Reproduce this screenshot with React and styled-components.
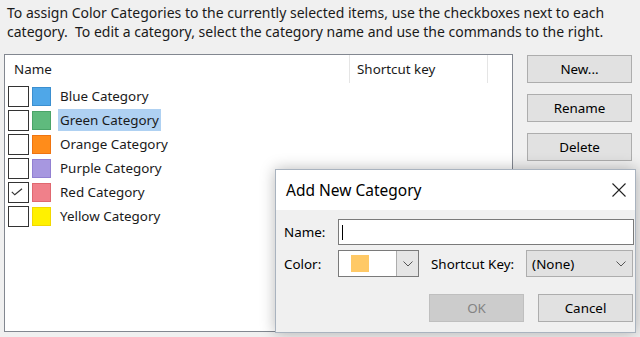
import React from "react";
import styled, { createGlobalStyle } from "styled-components";

const categories = [
  { name: "Blue Category", fill: "#4fa7e8", edge: "#3b8fd0" },
  { name: "Green Category", fill: "#5fba7d", edge: "#4aa468", selected: true },
  { name: "Orange Category", fill: "#ff8c1a", edge: "#ef7410" },
  { name: "Purple Category", fill: "#a797e0", edge: "#9280d2" },
  { name: "Red Category", fill: "#f0808a", edge: "#e06870", checked: true },
  { name: "Yellow Category", fill: "#fff100", edge: "#f2d800" },
];

const GlobalStyle = createGlobalStyle`
  html, body {
    margin: 0;
    padding: 0;
    background: #f0f0f0;
  }
  body {
    font-family: "Noto Sans", "Open Sans", sans-serif;
    font-size: 13px;
    color: #1a1a1a;
  }
`;

const Page = styled.div`
  position: relative;
  width: 640px;
  height: 337px;
  box-sizing: border-box;
  padding: 3px 8px 5px 4px;
  background: #f0f0f0;
  overflow: hidden;
  display: flex;
  flex-direction: column;
`;

const Intro = styled.p`
  margin: 0 0 13px 3px;
  font-size: 14px;
  line-height: 19px;
  white-space: nowrap;
`;

const Main = styled.div`
  display: flex;
  gap: 14px;
  flex: 1;
`;

const ListBox = styled.div`
  width: 509px;
  box-sizing: border-box;
  border: 1px solid #828790;
  background: #fff;
`;

const HeaderRow = styled.div`
  display: grid;
  grid-template-columns: 345px 138px 1fr;
  height: 28px;
`;

const HeaderCell = styled.div`
  display: flex;
  align-items: center;
  padding-left: ${(p) => p.$pad || 9}px;
  border-right: ${(p) => (p.$last ? "none" : "1px solid #e5e5e5")};
  font-size: 13.4px;
`;

const Rows = styled.div`
  display: flex;
  flex-direction: column;
  padding: 1px 0 0 3px;
`;

const Row = styled.div`
  display: flex;
  align-items: center;
  height: 24px;
  gap: 3px;
`;

const Check = styled.div`
  width: 21px;
  height: 21px;
  box-sizing: border-box;
  border: 1px solid #333;
  background: #fff;
  display: flex;
  align-items: center;
  justify-content: center;
`;

const Swatch = styled.div`
  width: 19px;
  height: 19px;
  box-sizing: border-box;
  background: ${(p) => p.$fill};
  border: 1px solid ${(p) => p.$edge};
`;

const RowLabel = styled.span`
  margin-left: 4px;
  padding: 0 2px 0 2px;
  height: 22px;
  display: flex;
  align-items: center;
  background: ${(p) => (p.$selected ? "#afd1f2" : "transparent")};
  font-size: 13.4px;
`;

const ButtonColumn = styled.div`
  display: flex;
  flex-direction: column;
  gap: 11px;
  width: 105px;
  padding-top: 1px;
`;

const Button = styled.button`
  height: 28px;
  width: ${(p) => p.$width || 105}px;
  box-sizing: border-box;
  border: 1px solid ${(p) => (p.disabled ? "#bfbfbf" : "#adadad")};
  background: ${(p) => (p.disabled ? "#cccccc" : "#e1e1e1")};
  color: ${(p) => (p.disabled ? "#838383" : "#000")};
  font-family: inherit;
  font-size: 13.4px;
  padding: 0;
`;

const Dialog = styled.div`
  position: absolute;
  left: 275px;
  top: 169px;
  width: 361px;
  height: 164px;
  box-sizing: border-box;
  border: 1px solid #a9b3bf;
  background: #f0f0f0;
  box-shadow: 0 0 14px rgba(0, 0, 0, 0.28);
  display: flex;
  flex-direction: column;
`;

const TitleBar = styled.div`
  height: 40px;
  background: #fff;
  display: flex;
  align-items: center;
  justify-content: space-between;
  padding: 0 9px 0 10px;
`;

const Title = styled.span`
  font-size: 15.5px;
  color: #000;
`;

const Form = styled.div`
  display: grid;
  grid-template-columns: 54px 1fr;
  row-gap: 5px;
  padding: 9px 1px 0 8px;
`;

const Label = styled.label`
  display: flex;
  align-items: center;
  font-size: 13.4px;
  color: #000;
`;

const TextInput = styled.div`
  height: 26px;
  box-sizing: border-box;
  border: 1px solid #7a7a7a;
  background: #fff;
  display: flex;
  align-items: center;
  padding-left: 3px;
`;

const Caret = styled.span`
  width: 1px;
  height: 15px;
  background: #000;
`;

const ComboRow = styled.div`
  display: flex;
  align-items: center;
`;

const ColorCombo = styled.div`
  width: 81px;
  height: 27px;
  box-sizing: border-box;
  border: 1px solid #7a7a7a;
  background: #fff;
  display: flex;
`;

const ColorValue = styled.div`
  flex: 1;
  display: flex;
  align-items: center;
  padding-left: 12px;
`;

const ColorChip = styled.div`
  width: 18px;
  height: 17px;
  background: #ffc966;
`;

const ArrowPart = styled.div`
  width: 22px;
  box-sizing: border-box;
  border-left: 1px solid #adadad;
  background: #e5e5e5;
  display: flex;
  align-items: center;
  justify-content: center;
`;

const KeyLabel = styled(Label)`
  margin-left: 12px;
  margin-right: 12px;
`;

const KeyCombo = styled.div`
  width: 107px;
  height: 27px;
  box-sizing: border-box;
  border: 1px solid #adadad;
  background: #e1e1e1;
  display: flex;
  align-items: center;
  justify-content: space-between;
  padding: 0 6px 0 5px;
  font-size: 13.4px;
  color: #000;
`;

const Actions = styled.div`
  display: flex;
  justify-content: flex-end;
  gap: 14px;
  padding: 17px 2px 0 0;
`;

const Chevron = () => (
  <svg width="10" height="6" viewBox="0 0 10 6">
    <path d="M0.5 0.5 L5 5 L9.5 0.5" fill="none" stroke="#555" strokeWidth="1" />
  </svg>
);

export default function App() {
  return (
    <>
      <GlobalStyle />
      <Page>
        <Intro>
          To assign Color Categories to the currently selected items, use the checkboxes next to each
          <br />
          category.&nbsp; To edit a category, select the category name and use the commands to the right.
        </Intro>
        <Main>
          <ListBox>
            <HeaderRow>
              <HeaderCell>Name</HeaderCell>
              <HeaderCell $pad={7}>Shortcut key</HeaderCell>
              <HeaderCell $last />
            </HeaderRow>
            <Rows>
              {categories.map((c) => (
                <Row key={c.name}>
                  <Check>
                    {c.checked && (
                      <svg width="12" height="8" viewBox="0 0 12 8" style={{ marginLeft: -4 }}>
                        <path d="M0.8 3.8 L3.8 6.8 L11 0.8" fill="none" stroke="#333" strokeWidth="1.2" />
                      </svg>
                    )}
                  </Check>
                  <Swatch $fill={c.fill} $edge={c.edge} />
                  <RowLabel $selected={c.selected}>{c.name}</RowLabel>
                </Row>
              ))}
            </Rows>
          </ListBox>
          <ButtonColumn>
            <Button>New...</Button>
            <Button>Rename</Button>
            <Button>Delete</Button>
          </ButtonColumn>
        </Main>

        <Dialog>
          <TitleBar>
            <Title>Add New Category</Title>
            <svg width="14" height="14" viewBox="0 0 14 14">
              <path d="M0.5 0.5 L13.5 13.5 M13.5 0.5 L0.5 13.5" stroke="#222" strokeWidth="1.1" />
            </svg>
          </TitleBar>
          <Form>
            <Label>Name:</Label>
            <TextInput>
              <Caret />
            </TextInput>
            <Label>Color:</Label>
            <ComboRow>
              <ColorCombo>
                <ColorValue>
                  <ColorChip />
                </ColorValue>
                <ArrowPart>
                  <Chevron />
                </ArrowPart>
              </ColorCombo>
              <KeyLabel>Shortcut Key:</KeyLabel>
              <KeyCombo>
                (None)
                <Chevron />
              </KeyCombo>
            </ComboRow>
          </Form>
          <Actions>
            <Button disabled $width={95}>OK</Button>
            <Button $width={95}>Cancel</Button>
          </Actions>
        </Dialog>
      </Page>
    </>
  );
}
